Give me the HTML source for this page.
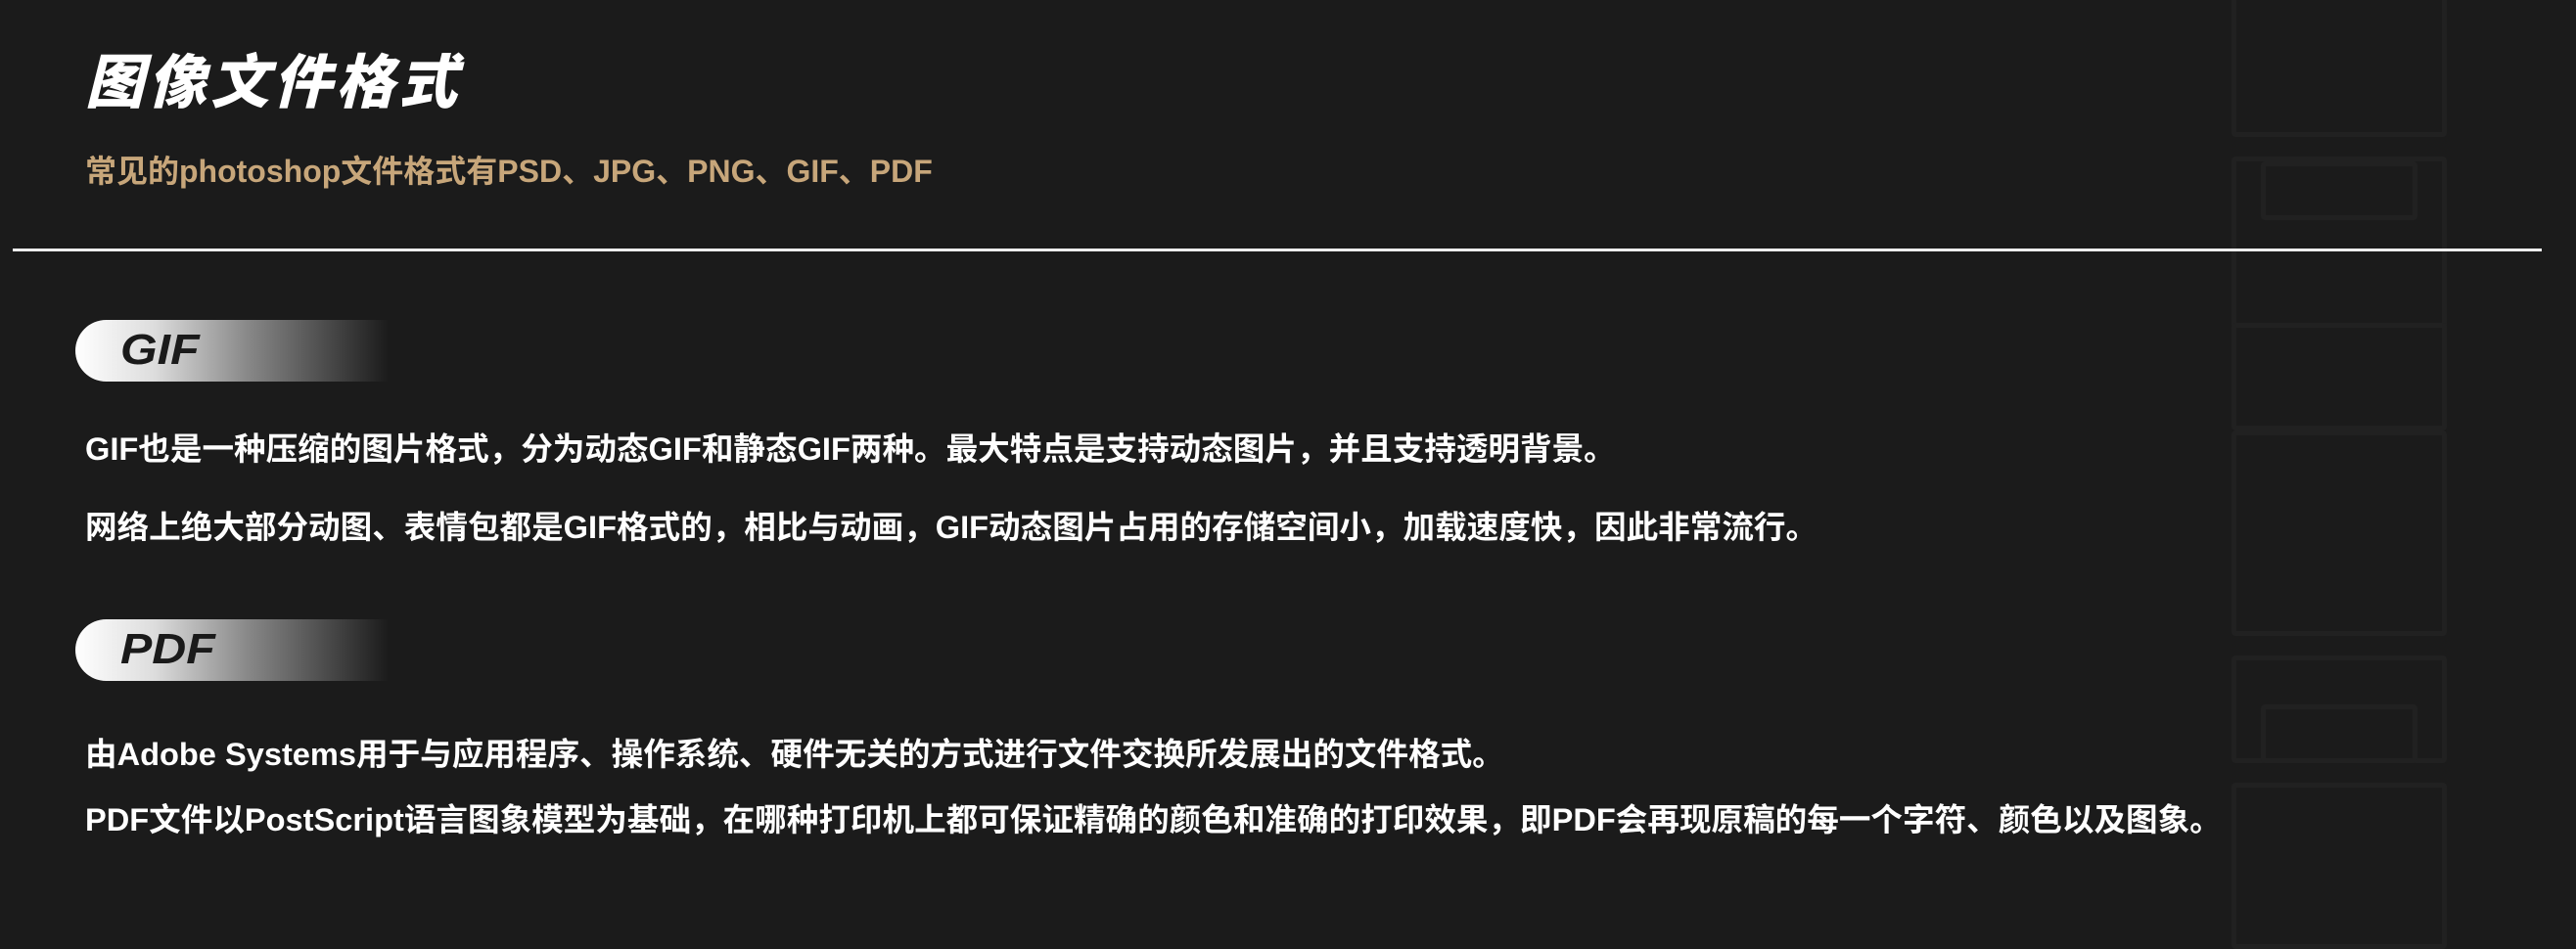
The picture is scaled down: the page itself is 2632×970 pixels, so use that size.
<!DOCTYPE html>
<html><head><meta charset="utf-8"><style>
html,body{margin:0;padding:0}
body{width:2632px;height:930px;background:#1b1b1b;position:relative;overflow:hidden;font-family:"Liberation Sans","Noto Sans CJK SC",sans-serif;color:#fff}
.a{position:absolute;white-space:nowrap}
.deco{position:absolute;border:5px solid #212121;border-radius:4px}
.pill{position:absolute;left:77px;width:320px;height:63px;border-radius:32px 0 0 32px;background:linear-gradient(90deg,#fff 0%,#ddd 25%,#888 55%,rgba(40,40,40,0) 100%)}
.pill span{position:absolute;left:46px;top:6px;font-size:44px;font-weight:900;font-style:italic;color:#1a1a1a;letter-spacing:0px;transform:scaleX(1.1);transform-origin:left}
.t{font-size:32.6px;font-weight:bold}
</style></head><body>
<div class="deco" style="left:2280px;top:-10px;width:210px;height:140px"></div>
<div class="deco" style="left:2280px;top:160px;width:210px;height:270px"></div>
<div class="deco" style="left:2310px;top:165px;width:150px;height:50px"></div>
<div class="deco" style="left:2280px;top:330px;width:210px;height:100px"></div>
<div class="deco" style="left:2280px;top:440px;width:210px;height:200px"></div>
<div class="deco" style="left:2280px;top:670px;width:210px;height:100px"></div>
<div class="deco" style="left:2310px;top:720px;width:150px;height:50px"></div>
<div class="deco" style="left:2280px;top:800px;width:210px;height:160px"></div>
<div class="a" style="left:87px;top:36px;font-size:60px;font-weight:900;font-style:italic;letter-spacing:4px">图像文件格式</div>
<div class="a" style="left:87px;top:150px;font-size:32px;font-weight:bold;color:#c7a67a">常见的photoshop文件格式有PSD、JPG、PNG、GIF、PDF</div>
<div class="a" style="left:13px;top:254px;width:2584px;height:3px;background:#eee"></div>
<div class="pill" style="top:327px"><span>GIF</span></div>
<div class="a t" style="left:87px;top:433px">GIF也是一种压缩的图片格式，分为动态GIF和静态GIF两种。最大特点是支持动态图片，并且支持透明背景。</div>
<div class="a t" style="left:87px;top:513px">网络上绝大部分动图、表情包都是GIF格式的，相比与动画，GIF动态图片占用的存储空间小，加载速度快，因此非常流行。</div>
<div class="pill" style="top:633px"><span>PDF</span></div>
<div class="a t" style="left:87px;top:745px">由Adobe Systems用于与应用程序、操作系统、硬件无关的方式进行文件交换所发展出的文件格式。</div>
<div class="a t" style="left:87px;top:812px">PDF文件以PostScript语言图象模型为基础，在哪种打印机上都可保证精确的颜色和准确的打印效果，即PDF会再现原稿的每一个字符、颜色以及图象。</div>
</body></html>
